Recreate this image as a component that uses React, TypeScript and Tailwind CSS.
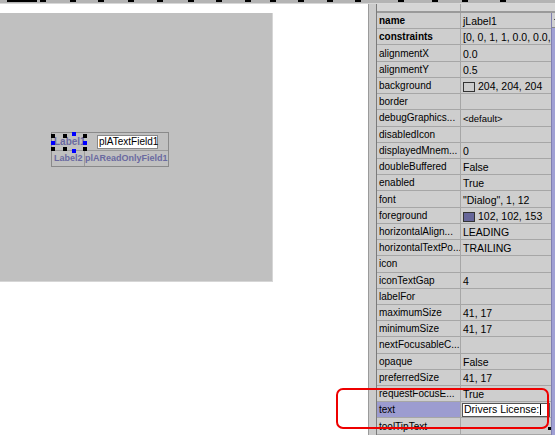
import React from 'react';

type Prop = { name: string; value?: React.ReactNode; bold?: boolean; small?: boolean };

const props: Prop[] = [
  { name: 'name', value: 'jLabel1', bold: true },
  { name: 'constraints', value: '[0, 0, 1, 1, 0.0, 0.0,', bold: true },
  { name: 'alignmentX', value: '0.0' },
  { name: 'alignmentY', value: '0.5' },
  {
    name: 'background',
    value: (
      <span className="flex items-center gap-[3px]">
        <span className="inline-block h-[10px] w-[12px] border border-[#333] bg-[#cccccc]" />
        204, 204, 204
      </span>
    ),
  },
  { name: 'border' },
  { name: 'debugGraphics...', value: '<default>', small: true },
  { name: 'disabledIcon' },
  { name: 'displayedMnem...', value: '0' },
  { name: 'doubleBuffered', value: 'False' },
  { name: 'enabled', value: 'True' },
  { name: 'font', value: '"Dialog", 1, 12' },
  {
    name: 'foreground',
    value: (
      <span className="flex items-center gap-[3px]">
        <span className="inline-block h-[10px] w-[12px] border border-[#333] bg-[#666699]" />
        102, 102, 153
      </span>
    ),
  },
  { name: 'horizontalAlign...', value: 'LEADING' },
  { name: 'horizontalTextPo...', value: 'TRAILING' },
  { name: 'icon' },
  { name: 'iconTextGap', value: '4' },
  { name: 'labelFor' },
  { name: 'maximumSize', value: '41, 17' },
  { name: 'minimumSize', value: '41, 17' },
  { name: 'nextFocusableC...' },
  { name: 'opaque', value: 'False' },
  { name: 'preferredSize', value: '41, 17' },
  { name: 'requestFocusE...', value: 'True' },
  { name: 'text' },
  { name: 'toolTipText' },
];

const ticks = [7, 40, 70, 98, 128, 157, 188, 216, 245, 270, 298, 327, 355, 398, 432, 462, 500];

const Ruler = () => (
  <svg width="555" height="4" className="block shrink-0">
    <rect x="0" y="0" width="555" height="4" fill="#b4b4b4" />
    <rect x="0" y="3" width="555" height="1" fill="#d8d8d8" />
    {ticks.map((x, i) => (
      <rect key={i} x={x} y="0" width={i === 0 ? 30 : 6} height="2" fill="#000" />
    ))}
  </svg>
);

const Handle = ({ cls }: { cls: string }) => (
  <span className={`absolute h-[4px] w-[4px] ${cls}`} />
);

const FormBox = () => (
  <div className="ml-[51px] mt-[118px] flex w-[118px] flex-col border border-[#8a8a8a] font-['Liberation_Sans',Arial,sans-serif]">
    <div className="flex h-[17px] items-center">
      <div className="relative flex h-[17px] w-[34px] items-center pl-[2px] text-[10px] font-bold text-[#6a6aa0]">
        Label1
        <Handle cls="left-[-1px] top-[1px] bg-black" />
        <Handle cls="left-[11px] top-[1px] bg-black" />
        <Handle cls="left-[31px] top-[1px] bg-black" />
        <Handle cls="left-[-1px] top-[14px] bg-black" />
        <Handle cls="left-[11px] top-[14px] bg-black" />
        <Handle cls="left-[31px] top-[14px] bg-black" />
        <Handle cls="left-[20px] top-[-1px] bg-[#0000ff]" />
        <Handle cls="left-[20px] top-[16px] bg-[#0000ff]" />
        <Handle cls="left-[-1px] top-[8px] bg-[#0000ff]" />
        <Handle cls="left-[31px] top-[8px] bg-[#0000ff]" />
      </div>
      <div className="ml-[11px] flex h-[14px] w-[61px] items-center border border-[#888] bg-white pl-[1px] text-[10px] text-black">
        plATextField1
      </div>
    </div>
    <div className="flex h-[16px] text-[9px] font-bold text-[#6a6aa0]">
      <div className="flex w-[33px] items-center border-t border-r border-[#9a9a9a] pl-[2px]">Label2</div>
      <div className="flex flex-1 items-center overflow-hidden whitespace-nowrap border-t border-[#9a9a9a]">plAReadOnlyField1</div>
    </div>
  </div>
);

const Row = ({ p }: { p: Prop }) => {
  const selected = p.name === 'text';
  return (
    <div className="flex h-[16.23px] shrink-0 border-b border-[#a6a6a6]">
      <div
        className={`flex w-[84px] shrink-0 items-center overflow-hidden whitespace-nowrap border-r border-[#a6a6a6] pl-[2px] text-[10px] text-black ${
          p.bold ? 'font-bold' : ''
        } ${selected ? 'bg-[#9c9cd0]' : 'bg-[#cecece]'}`}
      >
        {p.name}
      </div>
      <div className="flex flex-1 items-center overflow-hidden whitespace-nowrap bg-[#cecece] pl-[2px] pt-[3px] text-[10.5px] text-black">
        {selected ? (
          <div className="-mt-[3px] ml-[-1px] mr-[1px] flex h-[14px] flex-1 items-center border border-[#555] bg-white pl-[1px] text-[10.5px]">
            Drivers License:
            <span className="ml-[1px] inline-block h-[11px] w-[1px] bg-black" />
          </div>
        ) : (
          <span className={p.small ? 'text-[9.5px]' : ''}>{p.value}</span>
        )}
      </div>
    </div>
  );
};

export default function App() {
  return (
    <div className="relative flex h-[435px] w-[555px] flex-col overflow-hidden bg-white font-['Liberation_Sans',Arial,sans-serif]">
      <Ruler />
      <div className="flex min-h-0 flex-1">
        {/* designer canvas */}
        <div className="w-[368px] shrink-0 bg-white pt-[9px]">
          <div className="h-[269px] w-[273px] border-r border-b border-[#d6d6d6] bg-[#c0c0c0] pt-[1px]">
            <FormBox />
          </div>
        </div>

        {/* splitter */}
        <div className="w-[8px] shrink-0 border-l border-[#9a9a9a] bg-[#cbcbcb]" />

        {/* inspector */}
        <div className="flex flex-1 flex-col border-l border-[#7a7a7a] bg-[#cecece]">
          <div className="flex h-[9px] shrink-0 border-b-2 border-[#9a9a9a] bg-[#d6d6d6]">
            <div className="w-[84px] border-r border-[#a6a6a6]" />
            <div className="flex-1" />
            <div className="w-[12px] bg-[#d6d6d6]" />
          </div>
          <div className="flex min-h-0 flex-1">
            <div className="flex flex-1 flex-col">
              {props.map((p) => (
                <Row key={p.name} p={p} />
              ))}
            </div>
            <div className="flex w-[12px] shrink-0 flex-col border-l border-[#8080b0]">
              <div className="flex h-[15px] shrink-0 items-start justify-center border-b border-[#888] bg-[#d0d0d0] pt-[3px]">
                <svg width="6" height="4" viewBox="0 0 6 4">
                  <path d="M0 4 L3 0 L6 4 Z" fill="#000" />
                </svg>
              </div>
              <div className="flex-1 bg-[#a0a0d4]" />
            </div>
          </div>
        </div>
      </div>

      {/* red highlight annotation */}
      <div className="absolute left-[336px] top-[388px] h-[41px] w-[213px] rounded-[7px] border-2 border-[#ee0000]" />
      <div className="absolute left-[548px] top-[427px] h-[3px] w-[3px] bg-black" />
    </div>
  );
}
